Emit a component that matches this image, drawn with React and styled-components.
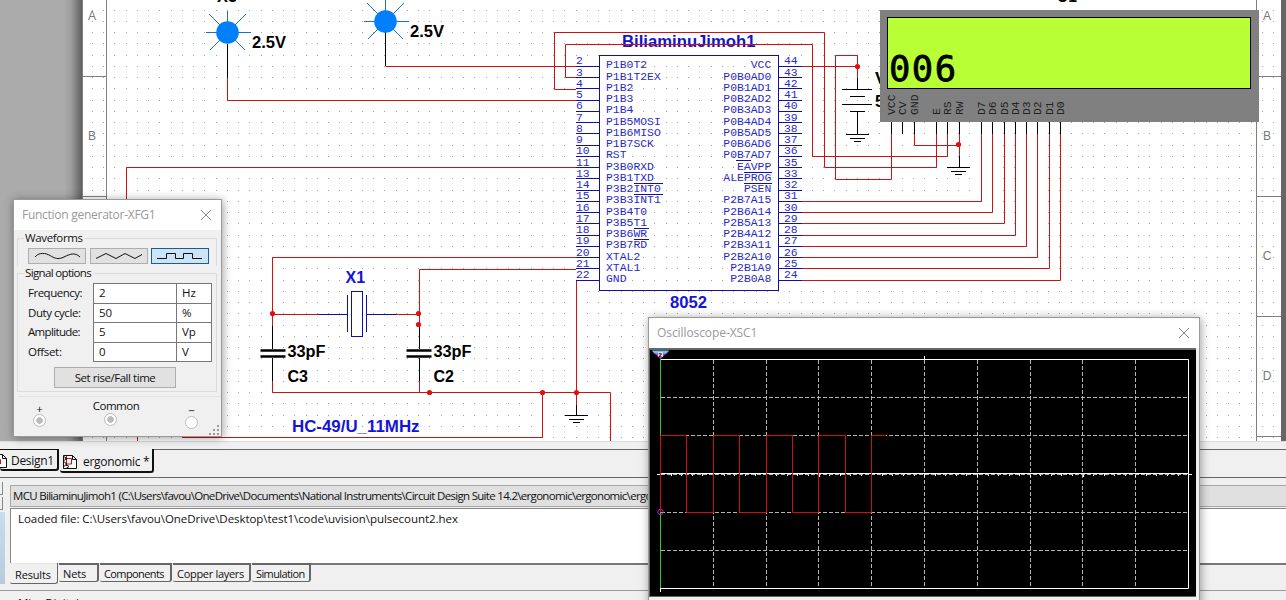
import React from "react";
import styled, { createGlobalStyle } from "styled-components";

const Global = createGlobalStyle`
  * { box-sizing: border-box; }
  body { margin: 0; background: #f0f0f0; overflow: hidden; }
`;
const ui = `"Open Sans", "Noto Sans", sans-serif`;

const Desktop = styled.main`
  position: relative;
  display: flex;
  flex-direction: column;
  width: 1286px;
  height: 600px;
  overflow: hidden;
  background: #f0f0f0;
  color: #111;
  font: 11.5px/14px ${ui};
`;
const Workspace = styled.section`
  display: flex;
  flex: 0 0 442px;
  border-bottom: 1px solid #dcdcdc;
`;
const Gutter = styled.div`
  flex: 0 0 82px;
  background: linear-gradient(90deg, #ababab 64px, #9d9d9d 71px, #606060 82px);
`;
const Sheet = styled.svg`
  display: block;
  flex: 0 0 1199px;
  height: 441px;
  background: #fff;
`;
const Edge = styled.div`
  flex: 1;
  background: #666;
`;
const Label = styled.span`
  white-space: pre;
  letter-spacing: ${(p) => p.$ls || 0}px;
  font-size: ${(p) => p.$size || 11.5}px;
`;

/* bottom docks */
const DocTabs = styled.nav`
  display: flex;
  align-items: flex-start;
  flex: 0 0 36px;
  padding-top: 7px;
  border-bottom: 1px solid #666;
`;
const DocTab = styled.div`
  display: flex;
  align-items: center;
  gap: ${(p) => (p.$active ? 5 : 3)}px;
  width: ${(p) => p.$w}px;
  height: ${(p) => (p.$active ? 24 : 22)}px;
  padding: ${(p) => (p.$active ? "3px 0 0 2px" : "2px 0 0 0")};
  margin-right: ${(p) => (p.$active ? 0 : 1)}px;
  border: solid #111;
  border-width: ${(p) => (p.$active ? "0 2px 2px 0" : "1px 2px 2px 0")};
  border-radius: 0 0 3px 3px;
  font-size: 12px;
`;
const TabRest = styled.div`
  flex: 1;
  border-top: 1px solid #666;
`;
const Spread = styled.section`
  display: flex;
  flex: 0 0 113px;
  padding-top: 7px;
  border-bottom: 1px solid #999;
`;
const SideStrip = styled.aside`
  display: flex;
  flex-direction: column;
  gap: 2px;
  flex: 0 0 10px;
  margin-top: -3px;
`;
const Nub = styled.div`
  width: 3px;
  height: 13px;
  border: solid #888;
  border-width: 0 1px 1px 0;
`;
const BlueStrip = styled.div`
  width: 5px;
  height: 72px;
  background: linear-gradient(#c9dcee, #b7cbe0);
`;
const Output = styled.div`
  display: flex;
  flex-direction: column;
  flex: 1;
`;
const OutputTitle = styled.header`
  display: flex;
  align-items: center;
  height: 22px;
  padding-left: 2px;
  border: solid #a8a8a8;
  border-width: 1px 0 1px 1px;
  background: #e0e0e0;
`;
const OutputBody = styled.div`
  height: 55px;
  margin-top: 1px;
  padding: 3px 0 0 7px;
  border: 1px solid #888;
  border-right: 0;
  border-bottom: 0;
  background: #fff;
`;
const ResultTabs = styled.nav`
  display: flex;
  align-items: flex-start;
  gap: 1px;
  height: 27px;
  background: linear-gradient(#e6e6e6 1px, transparent 1px);
`;
const ResultTab = styled.div`
  display: flex;
  align-items: center;
  width: ${(p) => p.$w}px;
  height: ${(p) => (p.$active ? 21 : 19)}px;
  padding: ${(p) => (p.$active ? "4px 0 0 5px" : "1px 0 0 4px")};
  border: solid #666;
  border-width: ${(p) => (p.$active ? "0 1px 1px 0" : "2px 2px 1px 0")};
  border-radius: 0 0 3px 2px;
`;
const ResultRest = styled.div`
  flex: 1;
  margin-left: -1px;
  border-top: 2px solid #777;
`;
const NextDock = styled.div`
  flex: 1;
  padding: 5px 0 0 18px;
`;

/* floating instrument windows */
const Window = styled.section`
  position: absolute;
  left: ${(p) => p.$x}px;
  top: ${(p) => p.$y}px;
  width: ${(p) => p.$w}px;
  height: ${(p) => p.$h}px;
  display: flex;
  flex-direction: column;
  border: 1px solid #999;
  background: #f0f0f0;
  box-shadow: 1px 1px 9px rgba(0, 0, 0, 0.38);
`;
const TitleBar = styled.header`
  display: flex;
  align-items: center;
  justify-content: space-between;
  flex: 0 0 30px;
  padding: 0 9px 1px 8px;
  background: #fff;
  color: #999;
`;
const Close = () => (
  <svg width="12" height="12" viewBox="0 0 12 12" stroke="#888" fill="none">
    <path d="M1 1 11 11M11 1 1 11" />
  </svg>
);
const Group = styled.fieldset`
  position: relative;
  flex: 0 0 ${(p) => p.$h}px;
  min-height: 0;
  margin: ${(p) => (p.$last ? 0 : 1)}px 4px 0 3px;
  padding: 0;
  border: 1px solid #dcdcdc;
  border-bottom-width: ${(p) => (p.$last ? 1 : 0)}px;
`;
const Legend = styled.legend`
  height: 14px;
  margin-left: 6px;
  padding: 0 2px 0 1px;
  line-height: 14px;
`;
const WaveRow = styled.div`
  display: flex;
  gap: 3.5px;
  padding: 3px 0 0 10px;
`;
const WaveButton = styled.div`
  width: 58px;
  height: 16px;
  border: 1px solid ${(p) => (p.$on ? "#1d5c91" : "#adadad")};
  background: ${(p) => (p.$on ? "#cce4f7" : "#e1e1e1")};
`;
const Form = styled.div`
  display: grid;
  grid-template-columns: 65px 83px 35px;
  grid-template-rows: 20px 19px 20px 19px;
  padding: 3px 0 0 10px;
  align-items: center;
`;
const Cell = styled.div`
  height: calc(100% + 1px);
  margin-right: -1px;
  padding: 2px 0 0 5px;
  border: 1px solid #777;
  background: #fff;
`;
const PushButton = styled.div`
  display: grid;
  place-items: center;
  width: 122px;
  height: 21px;
  margin: 6px 0 0 36px;
  border: 1px solid #adadad;
  background: #e1e1e1;
`;
const Terminals = styled.div`
  display: flex;
  flex: 1;
  margin: 4px 0 0 4px;
  padding: 0 0 0 14px;
  border-top: 1px solid #e2e2e2;
`;
const Terminal = styled.div`
  display: flex;
  flex-direction: column;
  align-items: center;
  gap: ${(p) => p.$gap || 0}px;
  width: ${(p) => p.$w}px;
  margin-left: ${(p) => p.$ml || 0}px;
  padding-top: ${(p) => p.$top}px;
`;
const Sign = styled(Label)`
  line-height: 10px;
`;
const Radio = styled.i`
  flex: 0 0 13px;
  width: 13px;
  margin-right: ${(p) => p.$shift || 0}px;
  border: 1px solid #bbb;
  border-radius: 50%;
  background: ${(p) => (p.$on ? "radial-gradient(circle, #bbb 0 3px, #fff 3.6px)" : "#fff")};
`;
const Grip = styled.svg`
  align-self: flex-end;
  display: block;
  margin-left: auto;
`;
const Screen = styled.svg`
  display: block;
  background: #000;
`;
const Bezel = styled.div`
  height: 249px;
  margin-right: 3px;
  border: solid #666;
  border-width: 2px 1px 1px 1px;
  background: #000;
`;

const RED = "#c81414";
const BLUE = "#1010a8";
const pinY = (i) => Math.floor(66.25 + 11.25 * i) + 0.5;

const leftPins = ["P1B0T2", "P1B1T2EX", "P1B2", "P1B3", "P1B4", "P1B5MOSI", "P1B6MISO", "P1B7SCK", "RST", "P3B0RXD", "P3B1TXD", "P3B2INT0", "P3B3INT1", "P3B4T0", "P3B5T1", "P3B6WR", "P3B7RD", "XTAL2", "XTAL1", "GND"];
const leftNums = [2, 3, 4, 5, 6, 7, 8, 9, 10, 11, 13, 14, 15, 16, 17, 18, 19, 20, 21, 22];
const rightPins = ["VCC", "P0B0AD0", "P0B1AD1", "P0B2AD2", "P0B3AD3", "P0B4AD4", "P0B5AD5", "P0B6AD6", "P0B7AD7", "EAVPP", "ALEPROG", "PSEN", "P2B7A15", "P2B6A14", "P2B5A13", "P2B4A12", "P2B3A11", "P2B2A10", "P2B1A9", "P2B0A8"];
const rightNums = [44, 43, 42, 41, 40, 39, 38, 37, 36, 35, 33, 32, 31, 30, 29, 28, 27, 26, 25, 24];
const lcdPins = [["VCC", 891], ["CV", 902], ["GND", 914], ["E", 936], ["RS", 947], ["RW", 959], ["D7", 981], ["D6", 992], ["D5", 1004], ["D4", 1015], ["D3", 1026], ["D2", 1037], ["D1", 1049], ["D0", 1060]];

let gridPath = "";
for (let j = 0; j < 39; j++)
  for (let i = 0; i < 106; i++)
    gridPath += `M${Math.floor(92.3 + i * 11.25)} ${Math.floor(10.2 + j * 11.25)}h1v1h-1z`;

const Mono = ({ x, y, children, n, ...rest }) => (
  <text x={x} y={y} fontFamily='"Liberation Mono", monospace' fontSize="11.4" fill="#2a2ac8" textLength={(n || String(children).length) * 6.85} {...rest}>
    {children}
  </text>
);
const Bold = ({ x, y, w, fill = "#000", children }) => (
  <text x={x} y={y} fontFamily='"Liberation Sans", sans-serif' fontWeight="700" fontSize="16" fill={fill} textLength={w} lengthAdjust="spacingAndGlyphs">
    {children}
  </text>
);
const FrameLetter = ({ x, y, children }) => (
  <text x={x} y={y} fontFamily='"Liberation Sans", sans-serif' fontSize="12" fill="#777" textAnchor="middle">
    {children}
  </text>
);
const Lamp = ({ x, y }) => (
  <g>
    <g stroke="#1a72c4" shapeRendering="crispEdges">
      <path d={`M${x - 22} ${y}h45M${x} ${y - 22}v22`} />
      <path d={`M${x - 18} ${y - 18}l36 36M${x + 18} ${y - 18}l-36 36`} />
    </g>
    <circle cx={x} cy={y} r="11.3" fill="#0080ff" />
  </g>
);
const Ground = ({ x, y }) => <path d={`M${x - 11.5} ${y}h23M${x - 7.5} ${y + 4}h15M${x - 3.5} ${y + 7}h7`} />;

const Schematic = () => (
  <Sheet viewBox="82 0 1199 441">
    <path d={gridPath} fill="#a3a3a3" />
    <g stroke="#808080" fill="none" shapeRendering="crispEdges">
      <path d="M82 76.5H106.5M82 196.5H106.5M106.5 0V441M82.5 0V441" />
      <path d="M1256.5 0V441M1257 76.5h24M1257 196.5h24M1257 316.5h24M1257 436.5h24" />
    </g>
    {["A", "B"].map((c, i) => (
      <FrameLetter key={c} x={92} y={20 + i * 120}>{c}</FrameLetter>
    ))}
    {["A", "B", "C", "D"].map((c, i) => (
      <FrameLetter key={c} x={1267} y={20 + i * 120}>{c}</FrameLetter>
    ))}
    <Bold x={217} y={2} w={20}>X5</Bold>
    <Bold x={1057} y={2} w={20}>U1</Bold>
    <Bold x={622} y={47} w={133.5} fill="#1414c8">BiliaminuJimoh1</Bold>
    <Bold x={670} y={308} w={37} fill="#1414d8">8052</Bold>
    <Bold x={345.5} y={283} w={19.5} fill="#1414d8">X1</Bold>
    <Bold x={292} y={432} w={127.5} fill="#1414d8">HC-49/U_11MHz</Bold>
    <Bold x={252} y={48} w={34}>2.5V</Bold>
    <Bold x={410} y={37} w={34}>2.5V</Bold>
    <Bold x={287.5} y={357} w={38}>33pF</Bold>
    <Bold x={287.5} y={382} w={20.5}>C3</Bold>
    <Bold x={433.5} y={357} w={38}>33pF</Bold>
    <Bold x={433.5} y={382} w={20.5}>C2</Bold>
    <Bold x={875} y={84} w={21}>V1</Bold>
    <Bold x={875} y={107} w={20}>5V</Bold>

    <g stroke={RED} fill="none">
      <path d="M385.5 66.5H576M227.5 78V100.5H576M126.5 200V167.5H576M137.5 430V441" />
      <path d="M576 89.5H554.5V32.5H824.5V167.5H936.5V134M576 77.5H565.5V44.5H812.5V156.5H947.5V134" />
      <path d="M802 66.5H857.5M857.5 78V55.5H835.5V179.5H891.5V134M914.5 134V145.5H959.5M959.5 134V156" />
      {lcdPins.slice(6).map(([n, x], i) => <path key={n} d={`M${x + 0.5} 134V${pinY(12 + i)}H802`} />)}
      <path d="M576 257.5H272.5V326M576 269.5H419.5V326M272.5 314.5H318M396 314.5H419.5" />
      <path d="M272.5 381V392.5H610.5V441M419.5 381V392.5M542.5 392.5V437.5H182M576.5 280V405" />
    </g>
    <g stroke="#000" fill="none" shapeRendering="crispEdges">
      <path d="M227.5 44V78M385.5 32V66" />
      <path d="M857.5 78V89M842 89.5h30M850 96.5h15M842 104.5h30M850 111.5h15M857.5 111V134" />
      <Ground x={857.5} y={134.5} />
      <path d="M959.5 156V167" />
      <Ground x={958.5} y={167.5} />
      <path d="M576.5 405V415" />
      <Ground x={576.5} y={415.5} />
      <path d="M272.5 326V349M272.5 358V381M419.5 326V349M419.5 358V381" />
      {lcdPins.map(([n, x]) => <path key={n} d={`M${x + 0.5} 122V134`} />)}
    </g>
    <path d="M260.5 350.5h25M260.5 356.5h25M406.5 350.5h25M406.5 356.5h25" stroke="#000" strokeWidth="2.6" />
    <g stroke={BLUE} fill="none" shapeRendering="crispEdges">
      <path d="M318 314.5H347M366 314.5H396M347.5 295V332M366.5 295V332M351.5 291.5h11v45h-11z" />
      <rect x="599.5" y="55.5" width="179" height="235" />
      {leftNums.map((n, i) => <path key={n} d={`M576 ${pinY(i)}H599M779 ${pinY(i)}H802`} />)}
      <path d="M634 183.5h29M634 194.5h29M634 228.5h15M634 239.5h15M736 160.5h15M744 172.5h28M744 183.5h28" />
    </g>
    {leftPins.map((p, i) => (
      <React.Fragment key={p}>
        <Mono x={606} y={68.4 + 11.25 * i}>{p}</Mono>
        <Mono x={576} y={64.3 + 11.25 * i}>{leftNums[i]}</Mono>
        <Mono x={771.3 - rightPins[i].length * 6.85} y={68.4 + 11.25 * i}>{rightPins[i]}</Mono>
        <Mono x={784} y={64.3 + 11.25 * i}>{rightNums[i]}</Mono>
      </React.Fragment>
    ))}
    <g fill="#e01010">
      {[[857.5, 66.5], [958.5, 144.5], [272.5, 313.5], [418.5, 313.5], [418.5, 324.5], [429.5, 392.5], [542.5, 392.5], [576.5, 392.5]].map(([x, y]) => (
        <circle key={`${x}-${y}`} cx={x} cy={y} r="2.6" />
      ))}
    </g>
    <Lamp x={227.5} y={32.5} />
    <Lamp x={385.5} y={21.5} />

    <rect x="880" y="10" width="379" height="112" fill="#808080" />
    <rect x="887.5" y="17.5" width="363" height="71" fill="#b9ff36" stroke="#000" />
    <text x="889" y="80.8" fontFamily='"DejaVu Sans Mono", monospace' fontSize="35.5" textLength="67" stroke="#000" strokeWidth="0.8">006</text>
    {lcdPins.map(([n, x]) => (
      <Mono key={n} x={0} y={0} fill="#222" transform={`translate(${x + 3.6} 115) rotate(-90)`}>{n}</Mono>
    ))}
  </Sheet>
);

const gx = [713.5, 766.5, 818.5, 871.5, 924.5, 977.5, 1030.5, 1082.5, 1135.5];
const gy = [397.5, 435.5, 512.5, 550.5];
const Trace = () => (
  <Screen width="546" height="246" viewBox="650 350 546 246" fill="none">
    <g stroke="#b4b4b4" strokeDasharray="4 2">
      {gx.map((x) => <path key={x} d={`M${x} 360V588`} />)}
      {gy.map((y) => <path key={y} d={`M661 ${y}H1188`} />)}
    </g>
    <g stroke="#fff">
      <path d="M660 359.5H1188.5V588.5H660M657 474.5h4M660 473.5H1189M1188 474.5h4M924.5 356V360" />
      {Array.from({ length: 49 }, (_, i) => <path key={i} d={`M${Math.floor(671.2 + i * 10.56) + 0.5} 474v${i % 5 === 4 ? 3 : 2}`} />)}
    </g>
    <path d="M661 474.5H1188" stroke="#a9c4c4" strokeDasharray="4 2" />
    <path d="M660.5 359V590" stroke="#30c830" />
    <path d="M660.5 588V592" stroke="#fff" />
    <path stroke="#d01010" d="M660.5 512V435.5H686.5V512.5H713.5V435.5H739.5V512.5H766.5V435.5H792.5V512.5H818.5V435.5H845.5V512.5H871.5V435.5H886" />
    <circle cx="660.5" cy="512" r="2.7" stroke="#c020c0" />
    <path d="M652 351h17l-8.500 8z" fill="#c830d8" />
    <path d="M652 350.500h17l-2.500 3h-12z" fill="#6cc4ee" />
    <rect x="658" y="352" width="5" height="5" fill="#ddd" />
    <text x="658.5" y="357" fontFamily='"Liberation Sans", sans-serif' fontSize="6" fontWeight="700" fill="#000">2</text>
  </Screen>
);

const PageIcon = ({ w, children }) => (
  <svg width={w} height="16" viewBox={`${16 - w} 0 ${w} 16`} fill="none" stroke="#111">
    <path d="M1.500 1.500H10.500L14.500 5.500V14.500H1.500zM10.500 1.500V5.500H14.500" fill="#fff" />
    {children}
  </svg>
);

export default function App() {
  return (
    <Desktop>
      <Global />
      <Workspace>
        <Gutter />
        <Schematic />
        <Edge />
      </Workspace>
      <DocTabs>
        <DocTab $w={59}>
          <PageIcon w={8}><path d="M2 6.500H8.500V11" stroke="#c01010" /></PageIcon>
          <Label $size={12} $ls={-0.3}>Design1</Label>
        </DocTab>
        <DocTab $w={94} $active>
          <PageIcon w={16}>
            <path d="M4.500 2V12M3 4.500H9.500V10H3" stroke="#c01010" />
            <path d="M1 2l4 2.500-4 2.500 4 3-4 3M4 10.500l3 2-3 2" />
          </PageIcon>
          <Label $size={12} $ls={-0.3}>ergonomic *</Label>
        </DocTab>
        <TabRest />
      </DocTabs>
      <Spread>
        <SideStrip><Nub /><Nub /><BlueStrip /></SideStrip>
        <Output>
          <OutputTitle>
            <Label $ls={-0.69}>{"MCU BiliaminuJimoh1 (C:\\Users\\favou\\OneDrive\\Documents\\National Instruments\\Circuit Design Suite 14.2\\ergonomic\\ergonomic\\ergonomic)"}</Label>
          </OutputTitle>
          <OutputBody><Label $ls={-0.05}>{"Loaded file: C:\\Users\\favou\\OneDrive\\Desktop\\test1\\code\\uvision\\pulsecount2.hex"}</Label></OutputBody>
          <ResultTabs>
            <ResultTab $w={48} $active><Label $size={11} $ls={-0.15}>Results</Label></ResultTab>
            <ResultTab $w={40}><Label $size={11} $ls={-0.15}>Nets</Label></ResultTab>
            <ResultTab $w={72}><Label $size={11} $ls={-0.6}>Components</Label></ResultTab>
            <ResultTab $w={78}><Label $size={11} $ls={-0.3}>Copper layers</Label></ResultTab>
            <ResultTab $w={59}><Label $size={11} $ls={-0.6}>Simulation</Label></ResultTab>
            <ResultRest />
          </ResultTabs>
        </Output>
      </Spread>
      <NextDock><Label>Misc Digital</Label></NextDock>

      <Window $x={13} $y={199} $w={209} $h={238}>
        <TitleBar>
          <Label $size={12} $ls={-0.27}>Function generator-XFG1</Label>
          <Close />
        </TitleBar>
        <Group $h={35}>
          <Legend><Label $ls={-0.35}>Waveforms</Label></Legend>
          <WaveRow>
            <WaveButton><svg width="56" height="14" fill="none" stroke="#111"><path d="M6 8C10 3 17 4 21 6.500S29 11 35 8S46 3 51 8" /></svg></WaveButton>
            <WaveButton><svg width="56" height="14" fill="none" stroke="#111"><path d="M5 9.500 15 4.500 25 9.500 34 4.500 44 9.500 51 5.500" /></svg></WaveButton>
            <WaveButton $on><svg width="56" height="14" fill="none" stroke="#111"><path d="M5 9.500H14.500V4.500H23.500V9.500H31.500V4.500H40.500V9.500H50" /></svg></WaveButton>
          </WaveRow>
        </Group>
        <Group $h={126} $last>
          <Legend><Label $ls={-0.65}>Signal options</Label></Legend>
          <Form>
            <Label $ls={-0.5}>Frequency:</Label><Cell>2</Cell><Cell>Hz</Cell>
            <Label $ls={-0.45}>Duty cycle:</Label><Cell>50</Cell><Cell>%</Cell>
            <Label $ls={-0.65}>Amplitude:</Label><Cell>5</Cell><Cell>Vp</Cell>
            <Label $ls={-0.3}>Offset:</Label><Cell>0</Cell><Cell>V</Cell>
          </Form>
          <PushButton><Label $ls={-0.45}>Set rise/Fall time</Label></PushButton>
        </Group>
        <Terminals>
          <Terminal $w={15} $top={7}><Sign>+</Sign><Radio $on /></Terminal>
          <Terminal $w={44} $ml={47} $top={2}><Label $ls={-0.5}>Common</Label><Radio $on $shift={12} /></Terminal>
          <Terminal $w={15} $ml={46} $top={9}><Sign>−</Sign><Radio /></Terminal>
          <Grip width="12" height="12" fill="#999">
            <path d="M8 1h2v2h-2zM8 5h2v2h-2zM8 9h2v2h-2zM4 5h2v2h-2zM4 9h2v2h-2zM0 9h2v2h-2z" />
          </Grip>
        </Terminals>
      </Window>

      <Window $x={648} $y={317} $w={552} $h={300}>
        <TitleBar>
          <Label $size={12} $ls={-0.08}>Oscilloscope-XSC1</Label>
          <Close />
        </TitleBar>
        <Bezel><Trace /></Bezel>
      </Window>
    </Desktop>
  );
}
